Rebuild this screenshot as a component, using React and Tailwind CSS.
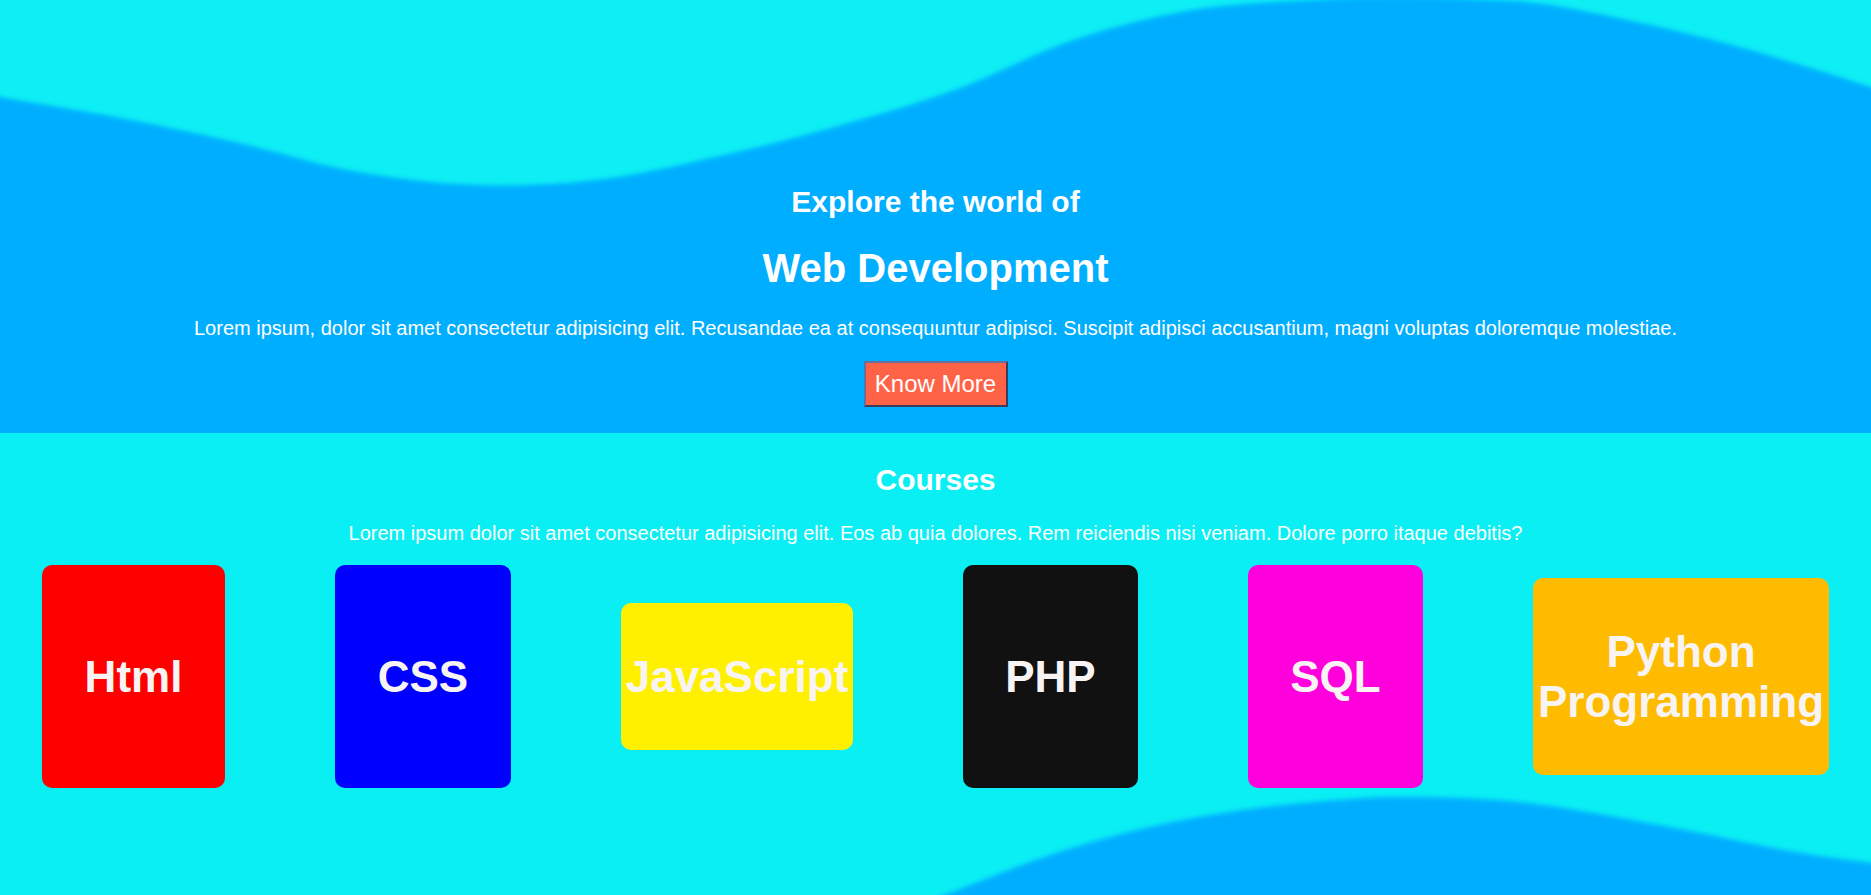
import React from 'react';

const smoothPath = (pts) => {
    let d = `M${pts[0][0]},${pts[0][1]}`;
    for (let i = 0; i < pts.length - 1; i++) {
        const p0 = pts[i - 1] || pts[i];
        const p1 = pts[i];
        const p2 = pts[i + 1];
        const p3 = pts[i + 2] || p2;
        const c1 = [p1[0] + (p2[0] - p0[0]) / 6, p1[1] + (p2[1] - p0[1]) / 6];
        const c2 = [p2[0] - (p3[0] - p1[0]) / 6, p2[1] - (p3[1] - p1[1]) / 6];
        d += ` C${c1[0]},${c1[1]} ${c2[0]},${c2[1]} ${p2[0]},${p2[1]}`;
    }
    return d;
};

const topWave = [
    [-60, 85], [0, 97], [120, 118], [239, 143], [358, 172], [477, 185], [597, 180],
    [716, 157], [835, 127], [955, 90], [1074, 40], [1193, 10], [1313, 0], [1400, -3],
    [1491, 0], [1550, 5], [1650, 25], [1750, 50], [1871, 87], [1940, 110],
];

const bottomWave = [
    [850, 500], [950, 460], [1050, 422], [1150, 394], [1250, 376], [1350, 366],
    [1408, 364], [1480, 366], [1551, 373], [1670, 394], [1790, 418], [1871, 430], [1950, 442],
];

const courses = [
    { name: 'Html', bg: 'bg-[#ff0000]', size: 'w-[183px] h-[223px]' },
    { name: 'CSS', bg: 'bg-[#0000ff]', size: 'w-[176px] h-[223px]' },
    { name: 'JavaScript', bg: 'bg-[#fff000]', size: 'w-[232px] h-[147px]' },
    { name: 'PHP', bg: 'bg-[#111111]', size: 'w-[175px] h-[223px]' },
    { name: 'SQL', bg: 'bg-[#ff00dc]', size: 'w-[175px] h-[223px]' },
    { name: 'Python Programming', bg: 'bg-[#ffbb00]', size: 'w-[296px] h-[197px]' },
];

const Hero = () => (
    <section className="relative h-[433px] overflow-hidden bg-[#00aeff]">
        <svg className="absolute inset-0 w-full h-full" viewBox="0 0 1871 433" preserveAspectRatio="none">
            <defs>
                <filter id="soft" x="-5%" y="-20%" width="110%" height="140%">
                    <feGaussianBlur stdDeviation="2.5" />
                </filter>
            </defs>
            <path
                d={`${smoothPath(topWave)} L1940,-40 L-60,-40 Z`}
                fill="#0aeff4"
                filter="url(#soft)"
            />
        </svg>
        <div className="relative flex flex-col items-center pt-[184px] text-white">
            <h2 className="text-[30px] leading-[36px] font-bold">Explore the world of</h2>
            <h1 className="mt-[25px] text-[40px] leading-[46px] font-bold">Web Development</h1>
            <p className="mt-[25px] text-[20px] leading-[24px]">
                Lorem ipsum, dolor sit amet consectetur adipisicing elit. Recusandae ea at consequuntur adipisci. Suscipit adipisci accusantium, magni voluptas doloremque molestiae.
            </p>
            <button className="mt-[21px] w-[144px] h-[46px] flex items-center justify-center bg-[#ff6347] text-white text-[24px] leading-none border-2 border-solid border-t-[#6470a0] border-l-[#6470a0] border-r-[#3c3c5c] border-b-[#3c3c5c]">
                Know More
            </button>
        </div>
    </section>
);

const Courses = () => (
    <section className="relative h-[462px] overflow-hidden bg-[#0aeff4]">
        <svg className="absolute inset-0 w-full h-full" viewBox="0 0 1871 462" preserveAspectRatio="none">
            <defs>
                <filter id="soft2" x="-5%" y="-20%" width="110%" height="140%">
                    <feGaussianBlur stdDeviation="2.5" />
                </filter>
            </defs>
            <path
                d={`${smoothPath(bottomWave)} L1950,520 L850,520 Z`}
                fill="#00aeff"
                filter="url(#soft2)"
            />
        </svg>
        <div className="relative flex flex-col items-center pt-[29px] text-white">
            <h2 className="text-[30px] leading-[36px] font-bold">Courses</h2>
            <p className="mt-[23px] text-[20px] leading-[24px]">
                Lorem ipsum dolor sit amet consectetur adipisicing elit. Eos ab quia dolores. Rem reiciendis nisi veniam. Dolore porro itaque debitis?
            </p>
            <div className="mt-[20px] w-full px-[42px] flex items-center justify-between h-[223px]">
                {courses.map((c) => (
                    <div
                        key={c.name}
                        className={`${c.bg} ${c.size} rounded-[10px] flex items-center justify-center text-center text-[44px] leading-[50px] font-bold text-[#f8f4f4]`}
                    >
                        {c.name}
                    </div>
                ))}
            </div>
        </div>
    </section>
);

export default function App() {
    return (
        <div className="font-['Liberation_Sans',Arial,sans-serif]">
            <Hero />
            <Courses />
        </div>
    );
}
